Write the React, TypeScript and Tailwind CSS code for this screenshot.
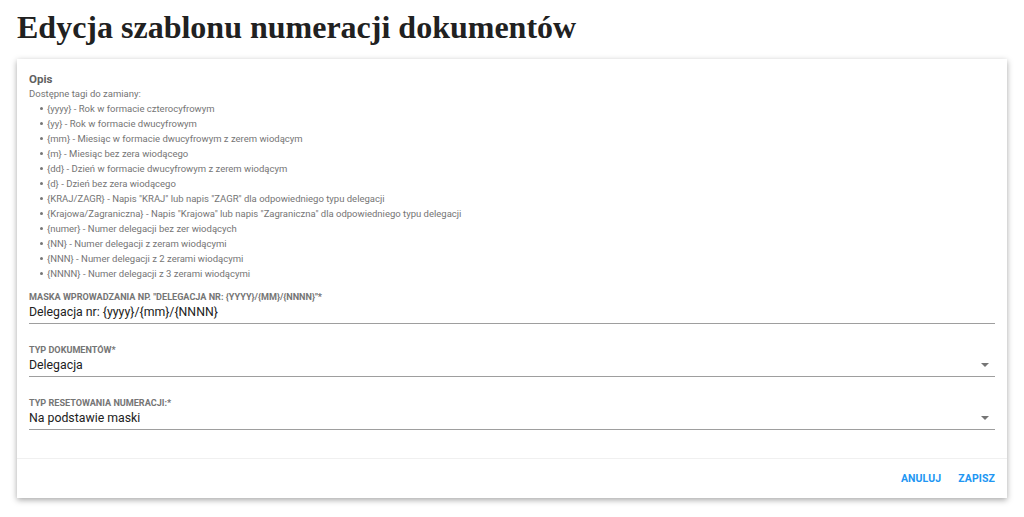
import React from 'react'

const tags: [string, string][] = [
  ['{yyyy}', 'Rok w formacie czterocyfrowym'],
  ['{yy}', 'Rok w formacie dwucyfrowym'],
  ['{mm}', 'Miesiąc w formacie dwucyfrowym z zerem wiodącym'],
  ['{m}', 'Miesiąc bez zera wiodącego'],
  ['{dd}', 'Dzień w formacie dwucyfrowym z zerem wiodącym'],
  ['{d}', 'Dzień bez zera wiodącego'],
  ['{KRAJ/ZAGR}', 'Napis "KRAJ" lub napis "ZAGR" dla odpowiedniego typu delegacji'],
  ['{Krajowa/Zagraniczna}', 'Napis "Krajowa" lub napis "Zagraniczna" dla odpowiedniego typu delegacji'],
  ['{numer}', 'Numer delegacji bez zer wiodących'],
  ['{NN}', 'Numer delegacji z zeram wiodącymi'],
  ['{NNN}', 'Numer delegacji z 2 zerami wiodącymi'],
  ['{NNNN}', 'Numer delegacji z 3 zerami wiodącymi'],
]

function Field({ label, value, select }: { label: string; value: string; select?: boolean }) {
  return (
    <div className="flex flex-col">
      <div className="text-[9.1px] font-bold uppercase leading-[11px] text-[#757575]">{label}</div>
      <div className="flex items-center justify-between border-b border-[#9e9e9e] pb-[3px] pt-[1px]">
        <span className="text-[12.3px] leading-[16px] text-[#212121]">{value}</span>
        {select && (
          <svg width="8" height="4" viewBox="0 0 8 4" className="mr-[6px]">
            <path d="M0 0 L8 0 L4 4 Z" fill="#757575" />
          </svg>
        )}
      </div>
    </div>
  )
}

export default function App() {
  return (
    <div className="min-h-[517px] w-full bg-white" style={{ fontFamily: 'Roboto, "Liberation Sans", sans-serif' }}>
      <div className="px-[17px] pt-[6px]">
        <h1
          className="text-[32px] font-bold leading-[42px] text-[#212121]"
          style={{ fontFamily: '"Liberation Serif", "DejaVu Serif", serif' }}
        >
          Edycja szablonu numeracji dokumentów
        </h1>
        <div className="mt-[11px] w-[990px] bg-white shadow-[0_2px_6px_rgba(0,0,0,0.35)]">
          <div className="px-[12px] pb-[28px] pt-[13px]">
            <div className="text-[11.5px] font-bold leading-[14px] text-[#616161]">Opis</div>
            <div className="text-[9.5px] leading-[15px] text-[#757575]">Dostępne tagi do zamiany:</div>
            <ul className="text-[9.5px] leading-[15px] text-[#757575]">
              {tags.map(([t, d]) => (
                <li key={t} className="flex items-center pl-[11px]">
                  <span className="mr-[4px] inline-block h-[3px] w-[3px] rounded-full bg-[#757575]" />
                  {t} - {d}
                </li>
              ))}
            </ul>
            <div className="mt-[11px] flex flex-col gap-[21px]">
              <Field label={'Maska wprowadzania np. "Delegacja nr: {yyyy}/{mm}/{NNNN}"*'} value="Delegacja nr: {yyyy}/{mm}/{NNNN}" />
              <Field label="Typ dokumentów*" value="Delegacja" select />
              <Field label="Typ resetowania numeracji:*" value="Na podstawie maski" select />
            </div>
          </div>
          <div className="flex h-[40px] items-center justify-end gap-[17px] border-t border-[#f0f0f0] pr-[12px]">
            <button className="text-[10.5px] font-bold tracking-[0.1px] text-[#2196f3]">ANULUJ</button>
            <button className="text-[10.5px] font-bold tracking-[0.1px] text-[#2196f3]">ZAPISZ</button>
          </div>
        </div>
      </div>
    </div>
  )
}
